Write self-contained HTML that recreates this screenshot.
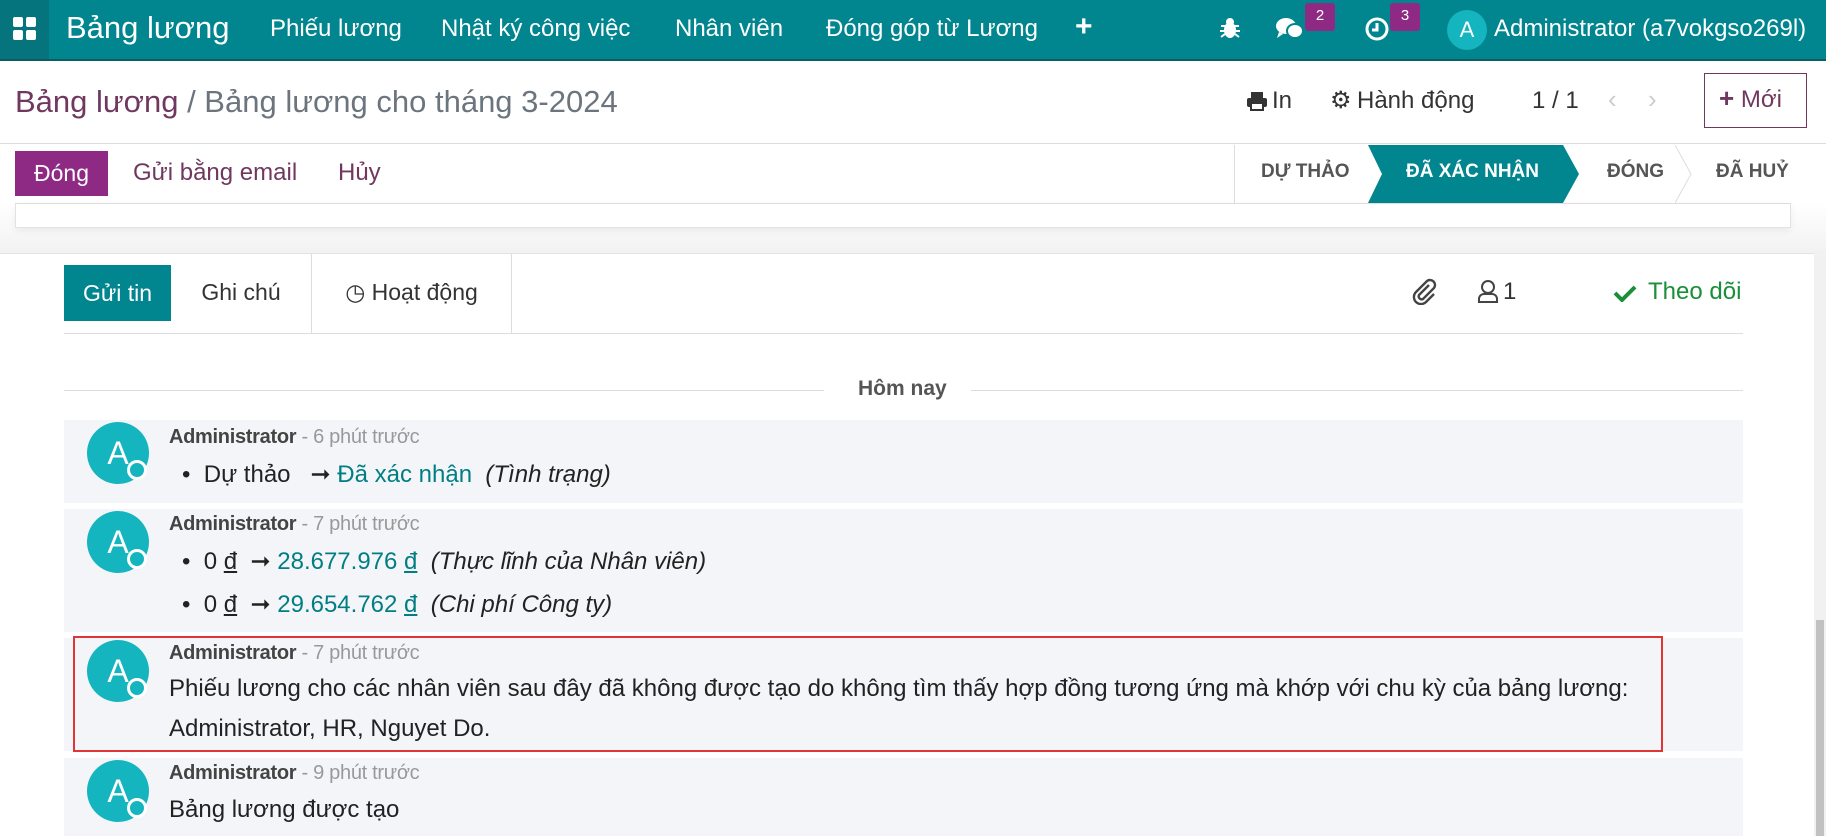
<!DOCTYPE html>
<html><head><meta charset="utf-8"><style>
*{margin:0;padding:0;box-sizing:border-box}
body{width:1826px;height:836px;overflow:hidden;background:#fff;font-family:"Liberation Sans",sans-serif;position:relative;color:#374151}
.a{position:absolute;white-space:nowrap}
.nav{left:0;top:0;width:1826px;height:61px;background:#01858f;border-bottom:2px solid #0b5d63}
.nav .t{color:#fff;font-size:24px;top:15px}
.badge{background:#8e2a84;color:#fff;font-size:15px;width:30px;height:28px;text-align:center;line-height:26px;border-radius:3px;top:3px}
.st{font-size:19px;font-weight:bold;top:161px;color:#555}
.msg{left:64px;width:1679px;background:#f4f5f8}
.av{width:62px;height:62px;border-radius:50%;background:#14b5bf;color:#fff;font-size:32px;text-align:center;line-height:62px;left:23px}
.dot{width:20px;height:20px;border-radius:50%;background:#14b5bf;border:3px solid #fff;left:63px}
.au{left:105px;font-size:20px;color:#444;font-weight:bold;letter-spacing:-0.3px}
.au span{font-weight:normal;color:#999;font-size:20px}
.bd{left:105px;font-size:24px;color:#222}
.lk{color:#017e84}
</style></head><body>
<div class="a nav">
 <div class="a" style="left:0;top:0;width:49px;height:59px;background:#06747d"></div>
 <svg class="a" style="left:13px;top:17px" width="24" height="24"><rect x="0" y="0" width="10" height="10" rx="2" fill="#fff"/><rect x="13" y="0" width="10" height="10" rx="2" fill="#fff"/><rect x="0" y="13" width="10" height="10" rx="2" fill="#fff"/><rect x="13" y="13" width="10" height="10" rx="2" fill="#fff"/></svg>
 <div class="a t" style="left:66px;top:10px;font-size:31px">Bảng lương</div>
 <div class="a t" style="left:270px">Phiếu lương</div>
 <div class="a t" style="left:441px">Nhật ký công việc</div>
 <div class="a t" style="left:675px">Nhân viên</div>
 <div class="a t" style="left:826px">Đóng góp từ Lương</div>
 <div class="a t" style="left:1075px;top:10px;font-size:30px;font-weight:bold">+</div>
 <svg class="a" style="left:1219px;top:17px" width="22" height="22" viewBox="0 0 22 22" fill="#fff"><ellipse cx="11" cy="13" rx="6" ry="8"/><circle cx="11" cy="5" r="4"/><path d="M2 9h18M1 14h20M2 20l4-3M20 20l-4-3" stroke="#fff" stroke-width="2"/></svg>
 <svg class="a" style="left:1275px;top:16px" width="30" height="26" viewBox="0 0 30 26"><ellipse cx="11" cy="10" rx="10" ry="8" fill="#fff"/><path d="M4 16l-2 6 6-4z" fill="#fff"/><ellipse cx="20" cy="15" rx="8" ry="7" fill="#fff" stroke="#01858f" stroke-width="2"/></svg>
 <div class="a badge" style="left:1305px">2</div>
 <svg class="a" style="left:1364px;top:16px" width="26" height="26" viewBox="0 0 26 26"><circle cx="13" cy="13" r="10" fill="none" stroke="#fff" stroke-width="3"/><path d="M13 7v7h-5" stroke="#fff" stroke-width="3" fill="none"/></svg>
 <div class="a badge" style="left:1390px">3</div>
 <div class="a" style="left:1447px;top:10px;width:40px;height:40px;border-radius:50%;background:#14b5bf;color:#fff;font-size:22px;text-align:center;line-height:40px">A</div>
 <div class="a t" style="left:1494px">Administrator (a7vokgso269l)</div>
</div>
<div class="a" style="left:15px;top:84px;font-size:31px;color:#71385f">Bảng lương <span style="color:#6c757d">/ Bảng lương cho tháng 3-2024</span></div>
<svg class="a" style="left:1247px;top:91px" width="20" height="20" viewBox="0 0 20 20" fill="#333"><rect x="4" y="1" width="12" height="6"/><rect x="0" y="7" width="20" height="9" rx="2"/><rect x="4" y="12" width="12" height="7" fill="#fff" stroke="#333" stroke-width="2"/></svg>
<div class="a" style="left:1272px;top:87px;font-size:24px;color:#333">In</div>
<div class="a" style="left:1330px;top:86px;font-size:24px;color:#333">⚙</div>
<div class="a" style="left:1357px;top:87px;font-size:24px;color:#333">Hành động</div>
<div class="a" style="left:1532px;top:87px;font-size:24px;color:#333">1 / 1</div>
<div class="a" style="left:1608px;top:84px;font-size:26px;color:#ccc">‹</div>
<div class="a" style="left:1648px;top:84px;font-size:26px;color:#ccc">›</div>
<div class="a" style="left:1704px;top:73px;width:103px;height:55px;border:1px solid #71385f;color:#71385f;font-size:24px;padding:12px 0 0 14px"><b style="font-size:26px;line-height:20px">+</b> Mới</div>
<div class="a" style="left:0;top:143px;width:1826px;height:1px;background:#ddd"></div>
<div class="a" style="left:15px;top:151px;width:93px;height:45px;background:#8e2a84;color:#fff;font-size:23px;text-align:center;line-height:45px">Đóng</div>
<div class="a" style="left:133px;top:159px;font-size:24px;color:#71385f">Gửi bằng email</div>
<div class="a" style="left:338px;top:159px;font-size:24px;color:#71385f">Hủy</div>
<div class="a" style="left:1234px;top:145px;width:1px;height:58px;background:#ddd"></div>
<svg class="a" style="left:1368px;top:145px" width="220" height="58"><polygon points="0,0 195,0 211,29 195,58 0,58 14,29" fill="#01858f"/></svg>
<svg class="a" style="left:1675px;top:145px" width="20" height="58"><polyline points="0,0 16,29 0,58" fill="none" stroke="#ddd"/></svg>
<div class="a st" style="left:1261px">DỰ THẢO</div>
<div class="a st" style="left:1406px;color:#fff">ĐÃ XÁC NHẬN</div>
<div class="a st" style="left:1607px">ĐÓNG</div>
<div class="a st" style="left:1716px">ĐÃ HUỶ</div>
<div class="a" style="left:0;top:203px;width:1826px;height:50px;background:linear-gradient(#fff,#f2f2f2)"></div>
<div class="a" style="left:15px;top:203px;width:1776px;height:25px;background:#fff;border:1px solid #e2e2e2;border-top:1px solid #ddd;box-shadow:0 3px 8px rgba(0,0,0,.06)"></div>
<div class="a" style="left:0;top:253px;width:1826px;height:1px;background:#e2e2e2"></div>
<div class="a" style="left:1814px;top:250px;width:12px;height:586px;background:#f1f1f1"></div>
<div class="a" style="left:1816px;top:620px;width:8px;height:216px;background:#c1c1c1"></div>
<div class="a" style="left:64px;top:265px;width:107px;height:56px;background:#01858f;color:#fff;font-size:23px;text-align:center;line-height:56px">Gửi tin</div>
<div class="a" style="left:171px;top:254px;width:141px;height:80px;border-right:1px solid #ddd;font-size:23px;color:#333;text-align:center;line-height:76px">Ghi chú</div>
<div class="a" style="left:312px;top:254px;width:200px;height:80px;border-right:1px solid #ddd;font-size:23px;color:#333;text-align:center;line-height:76px">◷ Hoạt động</div>
<div class="a" style="left:64px;top:333px;width:1679px;height:1px;background:#ddd"></div>
<svg class="a" style="left:1411px;top:277px" width="26" height="28" viewBox="0 0 26 28"><path d="M18 8L8 18a3 3 0 0 0 4 4l11-11a5 5 0 0 0-7-7L5 15a7 7 0 0 0 10 10l8-8" fill="none" stroke="#444" stroke-width="2.4"/></svg>
<svg class="a" style="left:1476px;top:279px" width="24" height="24" viewBox="0 0 24 24"><circle cx="12" cy="8" r="6" fill="none" stroke="#444" stroke-width="2"/><path d="M3 23v-3a5 5 0 0 1 5-5h8a5 5 0 0 1 5 5v3z" fill="none" stroke="#444" stroke-width="2"/></svg>
<div class="a" style="left:1503px;top:278px;font-size:24px;color:#333">1</div>
<svg class="a" style="left:1613px;top:284px" width="24" height="18"><path d="M2 9l7 7L22 3" fill="none" stroke="#1a8f3a" stroke-width="4"/></svg>
<div class="a" style="left:1648px;top:278px;font-size:24px;color:#1a8f3a">Theo dõi</div>
<div class="a" style="left:64px;top:390px;width:760px;height:1px;background:#ddd"></div>
<div class="a" style="left:971px;top:390px;width:772px;height:1px;background:#ddd"></div>
<div class="a" style="left:858px;top:377px;font-size:21px;font-weight:bold;color:#555">Hôm nay</div>

<div class="a msg" style="top:420px;height:83px">
 <div class="a av" style="top:2px">A</div><div class="a dot" style="top:40px"></div>
 <div class="a au" style="top:6px">Administrator <span>- 6 phút trước</span></div>
 <div class="a bd" style="left:118px;top:40px">•&nbsp;&nbsp;Dự thảo &nbsp;&nbsp;➞ <span class="lk">Đã xác nhận</span> &nbsp;<i>(Tình trạng)</i></div>
</div>
<div class="a msg" style="top:509px;height:123px">
 <div class="a av" style="top:2px">A</div><div class="a dot" style="top:40px"></div>
 <div class="a au" style="top:4px">Administrator <span>- 7 phút trước</span></div>
 <div class="a bd" style="left:118px;top:38px">•&nbsp;&nbsp;0 <u>đ</u> &nbsp;➞ <span class="lk">28.677.976 <u>đ</u></span> &nbsp;<i>(Thực lĩnh của Nhân viên)</i></div>
 <div class="a bd" style="left:118px;top:81px">•&nbsp;&nbsp;0 <u>đ</u> &nbsp;➞ <span class="lk">29.654.762 <u>đ</u></span> &nbsp;<i>(Chi phí Công ty)</i></div>
</div>
<div class="a msg" style="top:638px;height:113px">
 <div class="a av" style="top:2px">A</div><div class="a dot" style="top:40px"></div>
 <div class="a au" style="top:4px">Administrator <span>- 7 phút trước</span></div>
 <div class="a bd" style="top:37px">Phiếu lương cho các nhân viên sau đây đã không được tạo do không tìm thấy hợp đồng tương ứng mà khớp với chu kỳ của bảng lương:</div>
 <div class="a bd" style="top:77px">Administrator, HR, Nguyet Do.</div>
</div>
<div class="a" style="left:73px;top:636px;width:1590px;height:116px;border:2px solid #e03535"></div>
<div class="a msg" style="top:758px;height:78px">
 <div class="a av" style="top:2px">A</div><div class="a dot" style="top:40px"></div>
 <div class="a au" style="top:4px">Administrator <span>- 9 phút trước</span></div>
 <div class="a bd" style="top:38px">Bảng lương được tạo</div>
</div>
</body></html>
